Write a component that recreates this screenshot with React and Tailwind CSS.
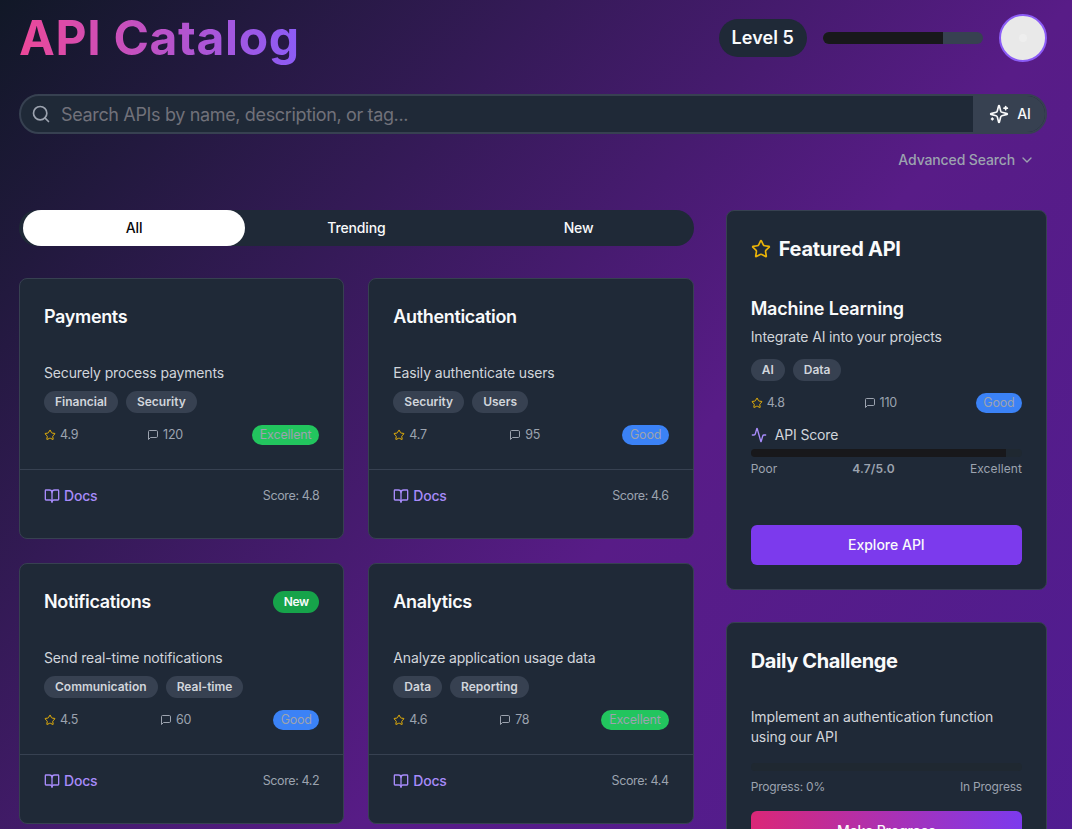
import React from "react";
import { Search, ChevronDown, Star, BookOpen, Activity } from "lucide-react";

function Sparkles({ className }) {
  return (
    <svg viewBox="0 0 24 24" fill="none" stroke="currentColor" strokeWidth="2" strokeLinecap="round" strokeLinejoin="round" className={className}>
      <path d="M9.937 15.5A2 2 0 0 0 8.5 14.063l-6.135-1.582a.5.5 0 0 1 0-.962L8.5 9.936A2 2 0 0 0 9.937 8.5l1.582-6.135a.5.5 0 0 1 .963 0L14.063 8.5A2 2 0 0 0 15.5 9.937l6.135 1.581a.5.5 0 0 1 0 .964L15.5 14.063a2 2 0 0 0-1.437 1.437l-1.582 6.135a.5.5 0 0 1-.963 0z" />
      <path d="M20 3v4" />
      <path d="M22 5h-4" />
      <path d="M4 17v2" />
      <path d="M5 18H3" />
    </svg>
  );
}

function Message({ className }) {
  return (
    <svg viewBox="0 0 24 24" fill="none" stroke="currentColor" strokeWidth="2" strokeLinecap="round" strokeLinejoin="round" className={className}>
      <path d="M21 15a2 2 0 0 1-2 2H7l-4 4V5a2 2 0 0 1 2-2h14a2 2 0 0 1 2 2z" />
    </svg>
  );
}

const apis = [
  { name: "Payments", desc: "Securely process payments", tags: ["Financial", "Security"], rating: "4.9", comments: "120", level: "Excellent", score: "4.8" },
  { name: "Authentication", desc: "Easily authenticate users", tags: ["Security", "Users"], rating: "4.7", comments: "95", level: "Good", score: "4.6" },
  { name: "Notifications", desc: "Send real-time notifications", tags: ["Communication", "Real-time"], rating: "4.5", comments: "60", level: "Good", score: "4.2", isNew: true },
  { name: "Analytics", desc: "Analyze application usage data", tags: ["Data", "Reporting"], rating: "4.6", comments: "78", level: "Excellent", score: "4.4" },
];

function Tags({ items }) {
  return (
    <div className="flex gap-2">
      {items.map((t) => (
        <span key={t} className="h-[22px] rounded-full bg-[#374151] px-[11px] text-xs leading-[22px] font-semibold text-[#d1d5db]">{t}</span>
      ))}
    </div>
  );
}

function Meta({ rating, comments, level }) {
  return (
    <div className="flex h-5 items-center justify-between text-[12.5px] tracking-[-0.2px] text-[#9ca3af]">
      <span className="flex items-center gap-1"><Star className="size-3 text-[#eab308]" />{rating}</span>
      <span className="flex items-center gap-1"><Message className="size-3" />{comments}</span>
      <span className={level === "Good" ? "rounded-full bg-[#3b82f6] px-[7.5px] leading-5" : "rounded-full bg-[#22c55e] px-2 leading-5"}>{level}</span>
    </div>
  );
}

function ApiCard({ api }) {
  return (
    <div className="flex h-[261px] flex-col rounded-lg border border-[#374151] bg-[#1f2937]">
      <div className="flex items-center justify-between px-6 pt-6">
        <h3 className="text-lg leading-7 font-semibold tracking-[-0.35px] text-[#f9fafb]">{api.name}</h3>
        {api.isNew && <span className="h-[22px] rounded-full bg-[#16a34a] px-[10.5px] text-xs leading-[22px] font-semibold tracking-[-0.3px] text-[#f9fafb]">New</span>}
      </div>
      <div className="mt-8 flex flex-col px-6 pb-6">
        <p className="mb-2 text-sm tracking-[-0.14px] text-[#d1d5db]">{api.desc}</p>
        <Tags items={api.tags} />
        <div className="mt-3"><Meta {...api} /></div>
      </div>
      <div className="flex items-center justify-between border-t border-[#374151] px-6 pt-4">
        <a className="flex items-center gap-1 text-sm font-medium tracking-[-0.2px] text-[#a78bfa]"><BookOpen className="size-4" />Docs</a>
        <span className="text-[12.5px] leading-5 tracking-[-0.38px] text-[#9ca3af]">Score: {api.score}</span>
      </div>
    </div>
  );
}

function Featured() {
  return (
    <section className="h-[380px] rounded-lg border border-[#374151] bg-[#1f2937] px-6 pt-6">
      <h2 className="flex h-7 items-center gap-2 text-xl font-bold tracking-[-0.25px] text-[#f9fafb]"><Star className="size-5 text-[#eab308]" />Featured API</h2>
      <h3 className="mt-8 text-lg leading-7 font-semibold tracking-[-0.17px] text-[#f9fafb]">Machine Learning</h3>
      <p className="mt-1 mb-3 text-sm tracking-[-0.14px] text-[#d1d5db]">Integrate AI into your projects</p>
      <Tags items={["AI", "Data"]} />
      <div className="mt-3"><Meta rating="4.8" comments="110" level="Good" /></div>
      <div className="mt-3 flex items-center gap-2 text-sm tracking-[-0.14px] text-[#d1d5db]"><Activity className="size-4 text-[#a78bfa]" />API Score</div>
      <div className="mt-1 h-2 overflow-hidden rounded-full bg-[#1f2831]"><div className="h-full w-[94%] bg-[#18181b]" /></div>
      <div className="mt-1 flex justify-between text-xs text-[#9ca3af]">
        <span>Poor</span><span className="font-semibold tracking-[0.2px]">4.7/5.0</span><span className="tracking-[0.1px]">Excellent</span>
      </div>
      <button className="mt-12 h-10 w-full rounded-md bg-[#7c3aed] text-sm font-medium text-[#f9fafb]">Explore API</button>
    </section>
  );
}

function Challenge() {
  return (
    <section className="h-[280px] rounded-lg border border-[#374151] bg-[#1f2937] px-6 pt-6">
      <h2 className="text-xl leading-7 font-bold tracking-[-0.37px] text-[#f9fafb]">Daily Challenge</h2>
      <p className="mt-8 text-sm tracking-[-0.09px] text-[#d1d5db]">Implement an authentication function<br />using our API</p>
      <div className="mt-4 h-2 rounded-full bg-[#1f2831]" />
      <div className="mt-2 flex justify-between text-xs tracking-[-0.19px] text-[#9ca3af]"><span>Progress: 0%</span><span>In Progress</span></div>
      <button className="mt-4 h-10 w-full rounded-md bg-linear-to-r/srgb from-[#db2777] to-[#7c3aed] text-sm font-medium tracking-[-0.1px] text-[#f9fafb]">Make Progress</button>
    </section>
  );
}

export default function App() {
  return (
    <div className="h-[829px] overflow-hidden font-['Inter',sans-serif]">
      <div className="h-[1250px] bg-linear-to-br/srgb from-[#111827] via-[#581c87] to-[#4c1d95] pt-[14px] pr-[25px] pl-[19px]">
        <header className="flex h-12 items-center justify-between">
          <h1 className="bg-linear-to-r/srgb from-[#ec4899] to-[#8b5cf6] bg-clip-text text-5xl leading-[60px] font-bold tracking-[0.65px] text-transparent">API Catalog</h1>
          <div className="flex items-center gap-4">
            <span className="h-[38px] rounded-full bg-[#1f2937] px-[13px] text-lg leading-[38px] font-semibold tracking-[0.08px] text-[#f9fafb]">Level 5</span>
            <div className="h-3 w-40 overflow-hidden rounded-full bg-[#374151]"><div className="h-full w-3/4 bg-[#18181b]" /></div>
            <div className="flex size-12 items-center justify-center rounded-full border-2 border-[#8b5cf6] bg-[#e9e9e9]">
              <span className="size-2 rounded-full bg-[#eeeeee]" />
            </div>
          </div>
        </header>
        <div className="mt-8 flex h-10 items-center overflow-hidden rounded-full border-2 border-[#374151] bg-[#1f2937]">
          <Search className="ml-2.5 size-5 text-[#9ca3af]" />
          <span className="ml-2.5 flex-1 pt-px text-lg tracking-[-0.35px] text-[#71717a]">Search APIs by name, description, or tag...</span>
          <button className="flex h-full w-[72px] items-center justify-center gap-2 bg-[#374151] pl-0.5 text-sm font-medium text-[#f9fafb]"><Sparkles className="size-5" />AI</button>
        </div>
        <div className="mt-4 flex h-5 items-center justify-end gap-1 pr-3 text-sm font-medium tracking-[-0.13px] text-[#9ca3af]">Advanced Search<ChevronDown className="size-4" /></div>
        <main className="mt-10 grid grid-cols-3 gap-8">
          <div className="col-span-2">
            <div className="grid h-9 grid-cols-3 rounded-full bg-[#1f2937] px-1 text-center text-sm leading-9 font-medium tracking-[-0.15px] text-[#f9fafb]">
              <span className="rounded-full bg-white text-[#09090b]">All</span><span>Trending</span><span>New</span>
            </div>
            <div className="mt-8 grid grid-cols-2 gap-6">
              {apis.map((a) => <ApiCard key={a.name} api={a} />)}
            </div>
          </div>
          <aside className="flex flex-col gap-8"><Featured /><Challenge /></aside>
        </main>
      </div>
    </div>
  );
}
